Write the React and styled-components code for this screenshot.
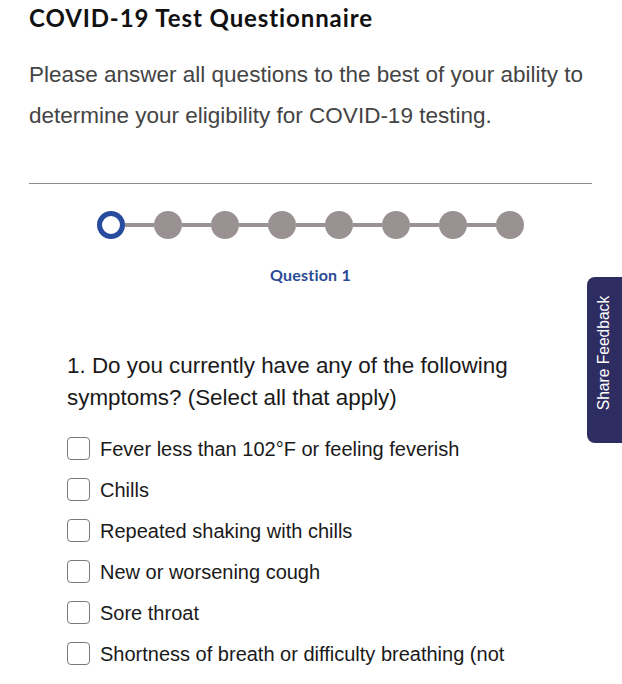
import styled, { createGlobalStyle } from 'styled-components'

const GlobalStyle = createGlobalStyle`
  body {
    margin: 0;
    background: #fff;
    font-family: "Liberation Sans", Arial, sans-serif;
  }
`

const Page = styled.div`
  padding: 3px 30px 0 29px;
`

const Title = styled.h1`
  margin: 0;
  font-family: Lato, "Noto Sans", sans-serif;
  font-weight: 700;
  font-size: 24px;
  letter-spacing: 0.9px;
  line-height: 30px;
  color: #111;
`

const Intro = styled.p`
  margin: 21px 0 0;
  font-size: 22.5px;
  line-height: 41px;
  color: #444;
`

const Divider = styled.hr`
  margin: 47px 0 0;
  border: none;
  border-top: 1px solid #8c8c8c;
`

const Stepper = styled.div`
  display: flex;
  align-items: center;
  justify-content: center;
  margin-top: 27px;
`

const Dot = styled.span`
  box-sizing: border-box;
  width: 28px;
  height: 28px;
  border-radius: 50%;
  flex: none;
  background: ${p => (p.$active ? '#fff' : '#9a9292')};
  border: ${p => (p.$active ? '5px solid #274b9f' : 'none')};
`

const Link = styled.span`
  width: 29px;
  height: 4px;
  background: #9a9292;
  flex: none;
`

const StepLabel = styled.div`
  margin-top: 26px;
  text-align: center;
  font-family: Lato, "Noto Sans", sans-serif;
  font-weight: 700;
  font-size: 16px;
  letter-spacing: 0.2px;
  line-height: 20px;
  color: #2a4a95;
`

const Question = styled.fieldset`
  margin: 65px 38px 0 38px;
  padding: 0;
  border: none;
`

const Legend = styled.legend`
  padding: 0;
  font-size: 22.4px;
  line-height: 32px;
  color: #1a1a1a;
`

const Options = styled.div`
  display: flex;
  flex-direction: column;
  margin-top: 14.5px;
`

const Option = styled.label`
  display: flex;
  align-items: flex-start;
  gap: 10px;
  font-size: 20px;
  line-height: 41px;
  color: #1a1a1a;
`

const Box = styled.span`
  box-sizing: border-box;
  flex: none;
  width: 23px;
  height: 23px;
  margin-top: 8.5px;
  border: 1.5px solid #7a7a7a;
  border-radius: 4px;
  background: #fff;
`

const FeedbackTab = styled.button`
  position: fixed;
  right: 0;
  top: 277px;
  width: 35px;
  height: 166px;
  padding: 0 0 14px;
  border: none;
  border-radius: 8px 0 0 8px;
  background: #2e2d61;
  color: #fff;
  font-family: "Liberation Sans", Arial, sans-serif;
  font-size: 15.6px;
  display: flex;
  align-items: center;
  justify-content: center;
  span {
    transform: rotate(-90deg);
    white-space: nowrap;
  }
`

const symptoms = [
  'Fever less than 102°F or feeling feverish',
  'Chills',
  'Repeated shaking with chills',
  'New or worsening cough',
  'Sore throat',
  'Shortness of breath or difficulty breathing (not related to a known condition)',
]

export default function App() {
  return (
    <>
      <GlobalStyle />
      <Page>
        <Title>COVID-19 Test Questionnaire</Title>
        <Intro>
          Please answer all questions to the best of your ability to determine your eligibility for COVID-19 testing.
        </Intro>
        <Divider />
        <Stepper>
          {Array.from({ length: 8 }).map((_, i) => (
            <span key={i} style={{ display: 'contents' }}>
              {i > 0 && <Link />}
              <Dot $active={i === 0} />
            </span>
          ))}
        </Stepper>
        <StepLabel>Question 1</StepLabel>
        <Question>
          <Legend>1. Do you currently have any of the following symptoms? (Select all that apply)</Legend>
          <Options>
            {symptoms.map(s => (
              <Option key={s}>
                <Box />
                {s}
              </Option>
            ))}
          </Options>
        </Question>
      </Page>
      <FeedbackTab>
        <span>Share Feedback</span>
      </FeedbackTab>
    </>
  )
}
